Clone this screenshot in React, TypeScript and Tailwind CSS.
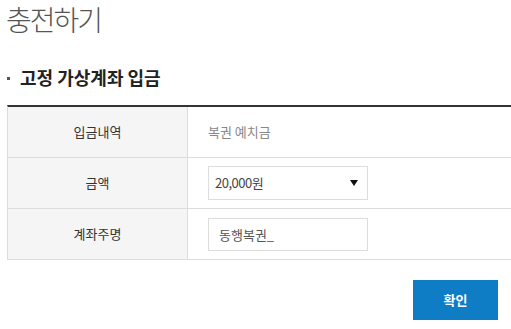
import { useState } from 'react';

export default function App() {
  const [amount, setAmount] = useState('20000');
  const [memo, setMemo] = useState('동행복권_');

  return (
    <div className="w-[511px] h-[329px] bg-white overflow-hidden text-[#333]" style={{ fontFamily: '"Noto Sans CJK KR", "Noto Sans", sans-serif' }}>
      {/* 페이지 제목 */}
      <h1 className="pl-[6px] pt-[1px] text-[28px] leading-[36px] font-light text-[#555] tracking-[-2px]">충전하기</h1>

      {/* 섹션 제목 */}
      <h2 className="mt-[28px] pl-[7px] flex items-center text-[18px] leading-[25px] font-bold text-[#222]">
        <span className="w-[3px] h-[3px] bg-[#555] mr-[10px] mt-[2px]" />
        고정 가상계좌 입금
      </h2>

      {/* 입금 테이블 */}
      <div className="mt-[15px] ml-[7px] border-t-2 border-[#333] border-l border-l-[#ddd] text-[13px]">
        <div className="flex h-[51px] border-b border-[#ddd]">
          <div className="w-[180px] bg-[#f5f5f5] border-r border-[#ddd] flex items-center justify-center text-[#333]">입금내역</div>
          <div className="flex-1 flex items-center pl-[20px] text-[#888]">복권 예치금</div>
        </div>
        <div className="flex h-[51px] border-b border-[#ddd]">
          <div className="w-[180px] bg-[#f5f5f5] border-r border-[#ddd] flex items-center justify-center text-[#333]">금액</div>
          <div className="flex-1 flex items-center pl-[20px]">
            <div className="relative w-[160px] h-[34px]">
              <select
                value={amount}
                onChange={e => setAmount(e.target.value)}
                className="appearance-none w-full h-full border border-[#ddd] bg-white pl-[6px] text-[13px] text-[#444] tracking-[-0.5px] outline-none"
              >
                <option value="5000">5,000원</option>
                <option value="10000">10,000원</option>
                <option value="20000">20,000원</option>
                <option value="50000">50,000원</option>
              </select>
              <span className="absolute right-[10px] top-[14px] w-0 h-0 border-l-[4px] border-r-[4px] border-t-[6px] border-l-transparent border-r-transparent border-t-[#111] pointer-events-none" />
            </div>
          </div>
        </div>
        <div className="flex h-[51px] border-b border-[#ddd]">
          <div className="w-[180px] bg-[#f5f5f5] border-r border-[#ddd] flex items-center justify-center text-[#333]">계좌주명</div>
          <div className="flex-1 flex items-center pl-[20px]">
            <input
              value={memo}
              onChange={e => setMemo(e.target.value)}
              className="w-[160px] h-[33px] border border-[#ddd] pl-[10px] text-[13px] text-[#555] outline-none"
            />
          </div>
        </div>
      </div>

      {/* 버튼 */}
      <div className="flex justify-end pr-[13px] mt-[20px]">
        <button className="w-[85px] h-[40px] bg-[#0f7dc5] text-white text-[13px] font-bold">확인</button>
      </div>
    </div>
  );
}
